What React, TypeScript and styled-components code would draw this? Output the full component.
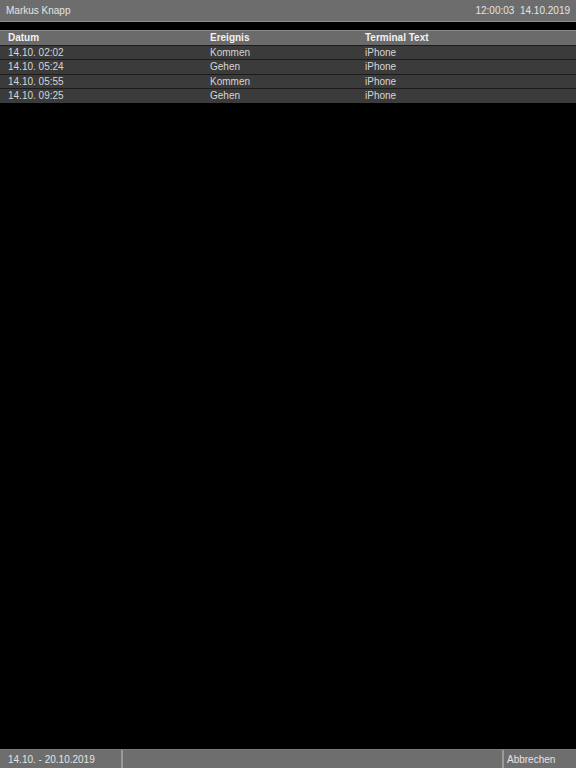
import React from 'react'
import styled, { createGlobalStyle } from 'styled-components'

const GlobalStyle = createGlobalStyle`
  html, body {
    margin: 0;
    padding: 0;
    background: #000;
  }
  body {
    font-family: "Liberation Sans", Arial, sans-serif;
    font-size: 10px;
  }
`

const Screen = styled.div`
  display: flex;
  flex-direction: column;
  height: 100vh;
  background: #000;
`

const TopBar = styled.div`
  display: flex;
  align-items: center;
  justify-content: space-between;
  box-sizing: border-box;
  height: 22px;
  padding: 0 6px 1px 6px;
  background: #6d6d6d;
  border-bottom: 1px solid #8e8e8e;
  color: #e4e4e4;
  white-space: pre;
`

const Table = styled.div`
  display: flex;
  flex-direction: column;
  margin-top: 8px;
`

const Row = styled.div<{ $header?: boolean }>`
  display: grid;
  grid-template-columns: 202px 155px 1fr;
  align-items: center;
  box-sizing: border-box;
  height: 14.5px;
  padding: 0 8px;
  background: ${({ $header }) => ($header ? '#6b6b6b' : '#3b3b3b')};
  border-top: 1px solid ${({ $header }) => ($header ? '#8a8a8a' : '#1c1c1c')};
  color: ${({ $header }) => ($header ? '#f2f2f2' : '#d6d6d6')};
  font-weight: ${({ $header }) => ($header ? 'bold' : 'normal')};
  line-height: 13px;
`

const Spacer = styled.div`
  flex: 1;
`

const BottomBar = styled.div`
  display: flex;
  box-sizing: border-box;
  height: 19px;
  background: #6e6e6e;
  border-top: 1px solid #7c7c7c;
  color: #e4e4e4;
`

const BarCell = styled.div<{ $width?: number; $grow?: boolean }>`
  display: flex;
  align-items: center;
  box-sizing: border-box;
  padding: 0 5px 0 8px;
  ${({ $width }) => ($width ? `width: ${$width}px;` : '')}
  ${({ $grow }) => ($grow ? 'flex: 1;' : '')}
  & + & {
    border-left: 2px solid #9a9a9a;
  }
`

const ActionCell = styled(BarCell)`
  padding-left: 3px;
  width: 74px;
`

const entries = [
  { date: '14.10. 02:02', event: 'Kommen', terminal: 'iPhone' },
  { date: '14.10. 05:24', event: 'Gehen', terminal: 'iPhone' },
  { date: '14.10. 05:55', event: 'Kommen', terminal: 'iPhone' },
  { date: '14.10. 09:25', event: 'Gehen', terminal: 'iPhone' },
]

const App = (): React.ReactElement => (
  <>
    <GlobalStyle />
    <Screen>
      <TopBar>
        <span>Markus Knapp</span>
        <span>12:00:03  14.10.2019</span>
      </TopBar>

      <Table>
        <Row $header>
          <span>Datum</span>
          <span>Ereignis</span>
          <span>Terminal Text</span>
        </Row>
        {entries.map((e, i) => (
          <Row key={i}>
            <span>{e.date}</span>
            <span>{e.event}</span>
            <span>{e.terminal}</span>
          </Row>
        ))}
      </Table>

      <Spacer />

      <BottomBar>
        <BarCell $width={121}>14.10. - 20.10.2019</BarCell>
        <BarCell $grow />
        <ActionCell>Abbrechen</ActionCell>
      </BottomBar>
    </Screen>
  </>
)

export default App
